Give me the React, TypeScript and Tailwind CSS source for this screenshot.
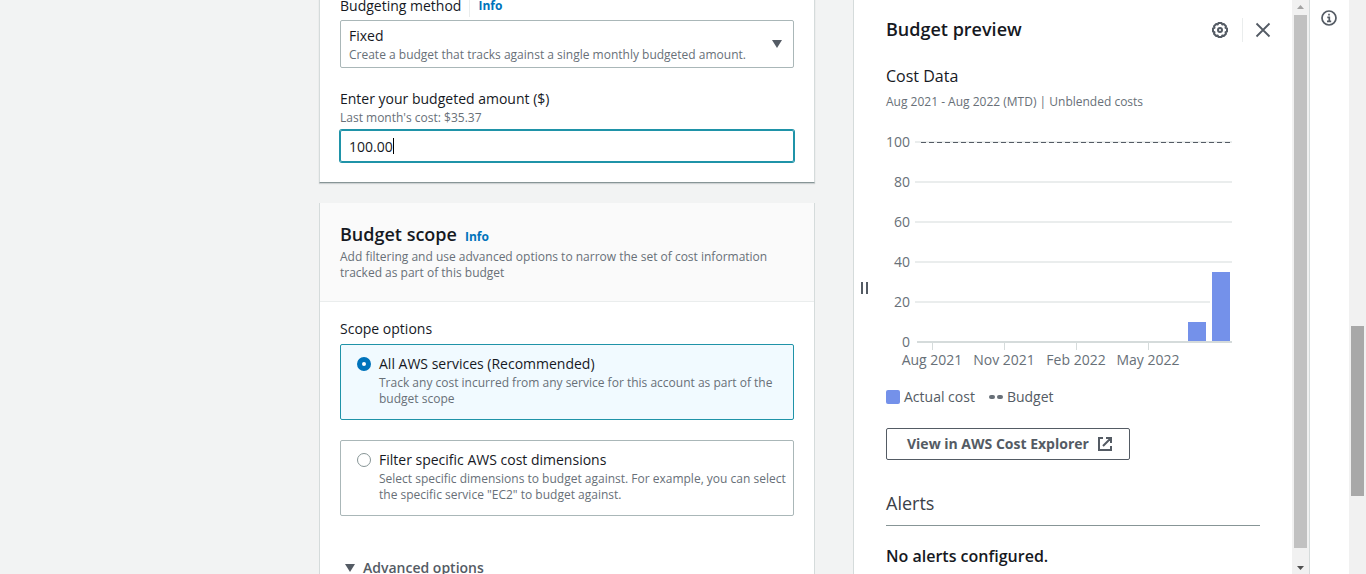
import React, { useState } from 'react';

const SCOPES = [
  {
    id: 'all',
    label: 'All AWS services (Recommended)',
    text: 'Track any cost incurred from any service for this account as part of the budget scope',
  },
  {
    id: 'filter',
    label: 'Filter specific AWS cost dimensions',
    text: 'Select specific dimensions to budget against. For example, you can select the specific service "EC2" to budget against.',
  },
];

const Y_TICKS = [100, 80, 60, 40, 20];
const X_TICKS = ['Aug 2021', 'Nov 2021', 'Feb 2022', 'May 2022'];
const BARS = [
  { month: 11, cost: 10 },
  { month: 12, cost: 35 },
];

function CostChart() {
  // two pixels per dollar, 24 pixels per month
  const y = (value: number) => 222 - value * 2;
  return (
    <svg width="374" height="262" role="img" aria-label="Actual cost by month" className="block max-w-full text-sm">
      {Y_TICKS.map(tick => (
        <g key={tick}>
          <line x1="29" x2="346" y1={y(tick)} y2={y(tick)} stroke="#eaeded" strokeWidth="2" />
          <text x="24" y={y(tick) + 5} textAnchor="end" fill="#687078">{tick}</text>
        </g>
      ))}
      {X_TICKS.map((label, i) => (
        <g key={label}>
          <line x1={46.5 + i * 72} x2={46.5 + i * 72} y1="223" y2="230" stroke="#d5dbdb" />
          <text x={46 + i * 72} y="245" textAnchor="middle" fill="#687078">{label}</text>
        </g>
      ))}
      {BARS.map(bar => (
        <rect key={bar.month} x={37 + bar.month * 24} y={y(bar.cost) - 1} width="20" height={bar.cost * 2 + 1} fill="#7491ea" stroke="#fff" strokeWidth="2" />
      ))}
      <line x1="31" x2="346" y1="222" y2="222" stroke="#d5dbdb" strokeWidth="2" />
      <text x="24" y="227" textAnchor="end" fill="#687078">0</text>
      <line x1="35" x2="345" y1="22.5" y2="22.5" stroke="#545b64" strokeDasharray="5 3" />
    </svg>
  );
}

function GearIcon() {
  return (
    <svg viewBox="0 0 16 16" className="w-4 h-4" fill="none" stroke="currentColor" strokeWidth="2" strokeLinejoin="round">
      <path d="M6.4 1h3.2l.6 1.500 1.600-.5 2.200 2.200-.5 1.600 1.500.6v3.200l-1.500.6.5 1.600-2.200 2.200-1.600-.5-.6 1.500H6.400l-.6-1.500-1.600.5L2 11.800l.5-1.600L1 9.600V6.400l1.500-.6L2 4.200 4.200 2l1.600.5z" />
      <circle cx="8" cy="8" r="2" />
    </svg>
  );
}

export default function App() {
  const [scope, setScope] = useState('all');
  const [amount, setAmount] = useState('100.00');

  return (
    <div className="flex h-screen overflow-hidden bg-[#f2f3f3] font-['Open_Sans',sans-serif] text-sm leading-[22px] text-[#16191f]">
      <main className="flex flex-1 justify-end min-w-0 pr-[38px]">
        <div className="w-full max-w-[496px] -mt-[5px]">
          {/* Budget amount */}
          <section className="bg-white border border-t-0 border-[#d5dbdb] border-b-[#879596] px-5 pb-5 shadow-[0_1px_1px_rgba(0,28,36,0.15)]">
            <div className="flex items-center">
              <label htmlFor="method" className="pr-2 border-r border-[#eaeded]">Budgeting method</label>
              <a href="#method-info" className="pl-2 text-xs font-bold text-[#0073bb]">Info</a>
            </div>
            <div className="relative mt-[3px]">
              <select id="method" className="block w-full h-12 pl-2 pb-4 appearance-none bg-white border border-[#aab7b8] rounded-xs">
                <option>Fixed</option>
              </select>
              <p className="absolute left-[9px] bottom-1 text-xs leading-[18px] text-[#687078] pointer-events-none">
                Create a budget that tracks against a single monthly budgeted amount.
              </p>
              <svg viewBox="0 0 10 8" className="absolute right-3 top-5 w-2.5 h-2 pointer-events-none" fill="#545b64">
                <path d="M0 0h10L5 8z" />
              </svg>
            </div>

            <label htmlFor="amount" className="block mt-5">Enter your budgeted amount ($)</label>
            <p className="text-xs leading-4 text-[#687078]">Last month's cost: $35.37</p>
            <div className="relative mt-1">
              <input
                id="amount"
                value={amount}
                onChange={e => setAmount(e.target.value)}
                className="block w-full h-8 px-2 border border-[#1f93a8] rounded-xs outline-none ring-1 ring-[#1f93a8]"
              />
              <span className="absolute left-[53px] top-2 h-4 w-px bg-black" />
            </div>
          </section>

          {/* Budget scope */}
          <section className="mt-5 bg-white border border-t-0 border-[#d5dbdb]">
            <header className="px-5 pt-5 pb-5 bg-[#fafafa] border-b border-[#eaeded]">
              <div className="flex items-baseline gap-2">
                <h2 className="text-lg leading-[22px] font-semibold">Budget scope</h2>
                <a href="#scope-info" className="text-xs font-bold text-[#0073bb]">Info</a>
              </div>
              <p className="mt-1 text-xs leading-4 text-[#687078]">
                Add filtering and use advanced options to narrow the set of cost information tracked as part of this budget
              </p>
            </header>
            <div className="px-5 pt-4">
              <fieldset>
                <legend className="pb-1">Scope options</legend>
                <div className="flex flex-col gap-5">
                  {SCOPES.map(item => (
                    <label
                      key={item.id}
                      className={`flex gap-2 pl-4 pr-1 pt-2 pb-3 border rounded-xs ${
                        scope === item.id ? 'border-[#1f93a8] bg-[#f1faff]' : 'border-[#aab7b8]'
                      }`}
                    >
                      <input
                        type="radio"
                        name="scope"
                        checked={scope === item.id}
                        onChange={() => setScope(item.id)}
                        className="mt-1 w-3.5 h-3.5 shrink-0 appearance-none rounded-full bg-white border border-[#879596] checked:border-[5px] checked:border-[#0073bb]"
                      />
                      <span>
                        <span className="block">{item.label}</span>
                        <span className="block text-xs leading-4 text-[#687078]">{item.text}</span>
                      </span>
                    </label>
                  ))}
                </div>
              </fieldset>
              <button className="flex items-center gap-2 mt-[41px] px-[5px] pb-5 font-semibold text-[#545b64]">
                <svg viewBox="0 0 10 8" className="w-2.5 h-2" fill="currentColor">
                  <path d="M0 0h10L5 8z" />
                </svg>
                Advanced options
              </button>
            </div>
          </section>
        </div>
      </main>

      <aside className="flex w-[457px] shrink-0 bg-white border-x border-[#d5dbdb]">
        <button aria-label="Resize panel" className="flex items-center w-8 pt-0.5 pl-[7px] gap-[3px]">
          <span className="w-0.5 h-3 bg-[#545b64]" />
          <span className="w-0.5 h-3 bg-[#545b64]" />
        </button>
        <div className="flex-1 pr-8 pt-4">
          <div className="flex items-start -mr-[11px]">
            <h2 className="flex-1 text-lg leading-[26px] font-semibold">Budget preview</h2>
            <div className="flex items-center h-7 text-[#545b64]">
              <button aria-label="Settings" className="pr-3.5"><GearIcon /></button>
              <span className="w-px h-6 bg-[#eaeded]" />
              <button aria-label="Close" className="pl-3">
                <svg viewBox="0 0 16 16" className="w-4 h-4" fill="none" stroke="currentColor" strokeWidth="1.800">
                  <path d="M1.500 1.500l13 13M14.500 1.500l-13 13" />
                </svg>
              </button>
            </div>
          </div>
          <h3 className="mt-5 text-base leading-6">Cost Data</h3>
          <p className="mt-1.5 text-xs text-[#687078]">Aug 2021 - Aug 2022 (MTD) | Unblended costs</p>
          <div className="mt-2.5"><CostChart /></div>
          <div className="flex items-center mt-1 gap-3.5 text-[#545b64]">
            <span className="flex items-center gap-1">
              <span className="w-3.5 h-3.5 bg-[#7491ea] rounded-xs" />
              Actual cost
            </span>
            <span className="flex items-center gap-1">
              <span className="flex gap-0.5">
                <span className="w-1.5 h-1 rounded-xs bg-[#687078]" />
                <span className="w-1.5 h-1 rounded-xs bg-[#687078]" />
              </span>
              Budget
            </span>
          </div>
          <button className="flex items-center h-8 mt-5 pl-5 pr-4 gap-2 font-bold text-[#545b64] border border-[#545b64] rounded-xs whitespace-nowrap">
            View in AWS Cost Explorer
            <svg viewBox="0 0 16 16" className="w-4 h-4" fill="none" stroke="currentColor" strokeWidth="2">
              <path d="M6 2H2v12h12v-4M9 2h5v5M14 2L6 10" />
            </svg>
          </button>
          <h3 className="mt-[29px] pb-2 text-lg leading-7 text-[#3b4048] border-b border-[#879596]">Alerts</h3>
          <p className="mt-[18px] text-base leading-6 font-semibold">No alerts configured.</p>
        </div>
        {/* Panel scrollbar */}
        <div className="flex flex-col items-center w-[17px] bg-[#f1f1f1]">
          <svg viewBox="0 0 7 4" className="w-[7px] h-1 mt-[5px] mb-1.5 shrink-0" fill="#a3a3a3"><path d="M0 4L3.500 0 7 4z" /></svg>
          <span className="flex-1 w-[13px] bg-[#c1c1c1]" />
          <svg viewBox="0 0 7 4" className="w-[7px] h-1 mt-[18px] mb-1 shrink-0" fill="#505050"><path d="M0 0h7L3.500 4z" /></svg>
        </div>
      </aside>

      <nav className="flex flex-col items-center w-[39px] shrink-0 pt-2.5 pr-0.5 bg-white">
        <button aria-label="Info" className="text-[#545b64]">
          <svg viewBox="0 0 16 16" className="w-4 h-4" fill="none" stroke="currentColor" strokeWidth="1.700">
            <circle cx="8" cy="8" r="7" />
            <path d="M6.300 7.300H8.300V11.200M6 11.400h4.200M7.200 4.700h1.600" />
          </svg>
        </button>
      </nav>
      {/* Page scrollbar */}
      <div className="flex flex-col items-center w-[17px] shrink-0 bg-[#f1f1f1]">
        <span className="flex-[326]" />
        <span className="flex-[170] w-[13px] bg-[#a8a8a8]" />
        <span className="flex-[78]" />
      </div>
    </div>
  );
}
